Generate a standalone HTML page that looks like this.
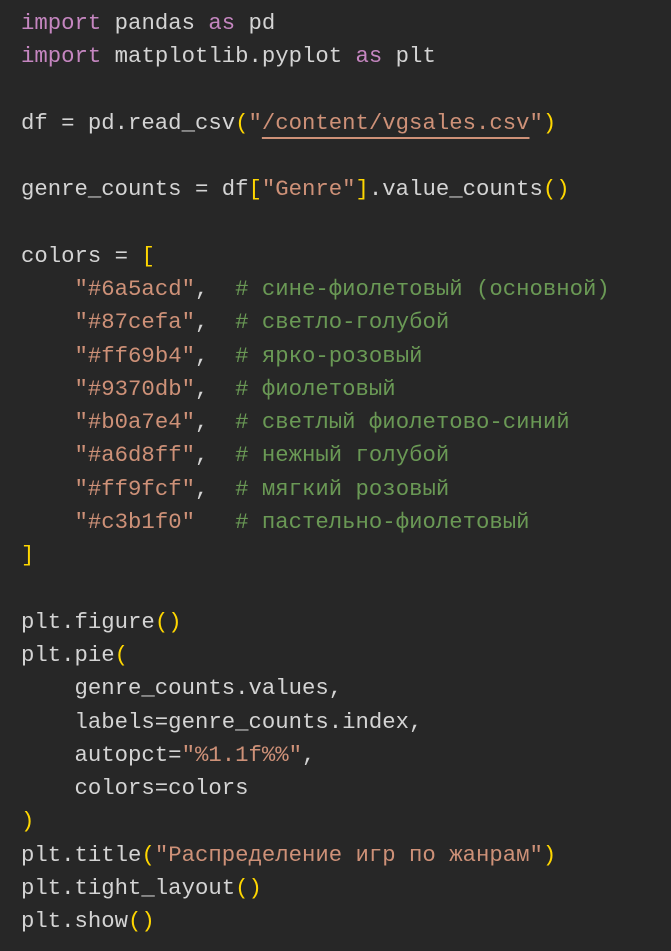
<!DOCTYPE html>
<html><head><meta charset="utf-8"><style>
html,body{margin:0;padding:0;background:#272727;width:671px;height:951px;overflow:hidden}
pre{margin:0;position:absolute;left:21px;top:7px;font-family:"Liberation Mono","DejaVu Sans Mono",monospace;font-size:22.3px;line-height:33.27px;color:#d4d4d4}
.k{color:#c586c0}.s{color:#ce9178}.c{color:#6a9955}.b{color:#ffd700}.u{text-decoration:underline;text-underline-offset:8px}
</style></head><body><pre><span class="k">import</span> pandas <span class="k">as</span> pd
<span class="k">import</span> matplotlib.pyplot <span class="k">as</span> plt

df = pd.read_csv<span class="b">(</span><span class="s">"<span class="u">/content/vgsales.csv</span>"</span><span class="b">)</span>

genre_counts = df<span class="b">[</span><span class="s">"Genre"</span><span class="b">]</span>.value_counts<span class="b">()</span>

colors = <span class="b">[</span>
    <span class="s">"#6a5acd"</span>,  <span class="c"># сине-фиолетовый (основной)</span>
    <span class="s">"#87cefa"</span>,  <span class="c"># светло-голубой</span>
    <span class="s">"#ff69b4"</span>,  <span class="c"># ярко-розовый</span>
    <span class="s">"#9370db"</span>,  <span class="c"># фиолетовый</span>
    <span class="s">"#b0a7e4"</span>,  <span class="c"># светлый фиолетово-синий</span>
    <span class="s">"#a6d8ff"</span>,  <span class="c"># нежный голубой</span>
    <span class="s">"#ff9fcf"</span>,  <span class="c"># мягкий розовый</span>
    <span class="s">"#c3b1f0"</span>   <span class="c"># пастельно-фиолетовый</span>
<span class="b">]</span>

plt.figure<span class="b">()</span>
plt.pie<span class="b">(</span>
    genre_counts.values,
    labels=genre_counts.index,
    autopct=<span class="s">"%1.1f%%"</span>,
    colors=colors
<span class="b">)</span>
plt.title<span class="b">(</span><span class="s">"Распределение игр по жанрам"</span><span class="b">)</span>
plt.tight_layout<span class="b">()</span>
plt.show<span class="b">()</span></pre></body></html>
